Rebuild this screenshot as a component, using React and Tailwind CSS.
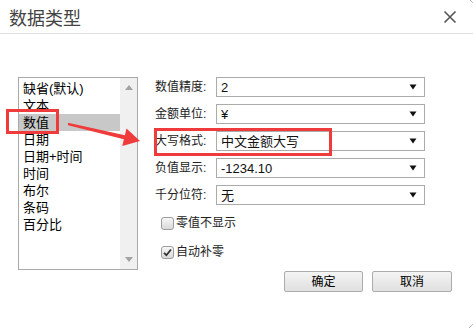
import React from "react";

const font = { fontFamily: '"Liberation Sans","Noto Sans CJK SC",sans-serif' };

function Select({ value }) {
  return (
    <div className="w-[209px] h-[20px] border border-[#ababab] bg-white flex items-center justify-between pl-[4px] pr-[7px] text-[13px] text-[#111]">
      <span className="leading-none">{value}</span>
      <svg width="8" height="6" viewBox="0 0 8 6"><polygon points="0.5,0.5 7.5,0.5 4,5.5" fill="#111" /></svg>
    </div>
  );
}

function Row({ label, value }) {
  return (
    <div className="flex items-center h-[20px]">
      <div className="w-[61px] text-[12px] text-[#222] leading-none">{label}:</div>
      <Select value={value} />
    </div>
  );
}

export default function App() {
  const items = ["缺省(默认)", "文本", "数值", "日期", "日期+时间", "时间", "布尔", "条码", "百分比"];
  return (
    <div className="relative w-[473px] h-[328px] bg-white overflow-hidden" style={font}>
      <div className="h-[34px] border-b border-[#dedede] flex items-center justify-between pl-[9px] pr-[16px]">
        <span className="text-[18px] text-[#444] leading-none" style={{ fontFamily: '"Noto Sans CJK SC",sans-serif' }}>数据类型</span>
        <svg width="14" height="14" viewBox="0 0 14 14"><path d="M1.5 1.5L12.5 12.5M12.5 1.5L1.5 12.5" stroke="#555" strokeWidth="1.6" /></svg>
      </div>
      <div className="flex pt-[43px]">
        <div className="ml-[18px] w-[120px] h-[193px] border border-[#a9a9a9] flex">
          <div className="flex-1 pt-[2px]">
            {items.map((t, i) => (
              <div key={t} className={"h-[17px] flex items-center pl-[4px] text-[13px] text-black leading-none " + (i === 2 ? "bg-[#c8c8c8]" : "")}>{t}</div>
            ))}
          </div>
          <div className="w-[17px] bg-[#f0f0f0] flex flex-col items-center justify-between py-[7px]">
            <svg width="8" height="5" viewBox="0 0 8 5"><polygon points="4,0 8,5 0,5" fill="#a3a3a3" /></svg>
            <svg width="8" height="5" viewBox="0 0 8 5"><polygon points="0,0 8,0 4,5" fill="#a3a3a3" /></svg>
          </div>
        </div>
        <div className="ml-[17px] w-[297px] flex flex-col">
          <div className="flex flex-col gap-[7px]">
            <Row label="数值精度" value="2" />
            <Row label="金额单位" value="¥" />
            <Row label="大写格式" value="中文金额大写" />
            <Row label="负值显示" value="-1234.10" />
            <Row label="千分位符" value="无" />
          </div>
          <div className="mt-[10px] flex items-center h-[16px] pl-[6px] gap-[2px] text-[12px] text-[#222]">
            <div className="w-[13px] h-[13px] rounded-[3px] border border-[#9d9d9d] bg-gradient-to-b from-[#f7f7f7] to-[#dadada]" />
            <span className="leading-none">零值不显示</span>
          </div>
          <div className="mt-[13px] flex items-center h-[16px] pl-[6px] gap-[2px] text-[12px] text-[#222]">
            <div className="w-[13px] h-[13px] rounded-[3px] border border-[#9d9d9d] bg-gradient-to-b from-[#f7f7f7] to-[#dadada] flex items-center justify-center">
              <svg width="9" height="9" viewBox="0 0 9 9"><path d="M1 4.8L3.4 7.2L8 1.5" stroke="#333" strokeWidth="1.8" fill="none" /></svg>
            </div>
            <span className="leading-none">自动补零</span>
          </div>
          <div className="mt-[11px] flex justify-end gap-[9px]">
            <button className="w-[79px] h-[21px] rounded-[2px] border border-[#acacac] bg-gradient-to-b from-[#f4f4f4] to-[#e0e0e0] text-[12px] text-black leading-none">确定</button>
            <button className="w-[80px] h-[21px] rounded-[2px] border border-[#acacac] bg-gradient-to-b from-[#f4f4f4] to-[#e0e0e0] text-[12px] text-black leading-none">取消</button>
          </div>
        </div>
      </div>
      <div className="absolute left-[6px] top-[109px] w-[53px] h-[25px] border-[3px] border-[#ef3b3b]" />
      <div className="absolute left-[154px] top-[128px] w-[178px] h-[28px] border-[3px] border-[#ef3b3b]" />
      <svg className="absolute left-0 top-0" width="473" height="328" viewBox="0 0 473 328">
        <polygon points="68,122.8 124.9,135.3 126.5,128.5 140,141 122.3,146.1 123.9,139.2 68,125.2" fill="#ef3b3b" />
        <path d="M470 0L473 3" stroke="#bbb" strokeWidth="1" />
        <path d="M473 324L469 328" stroke="#bbb" strokeWidth="1" />
      </svg>
    </div>
  );
}
